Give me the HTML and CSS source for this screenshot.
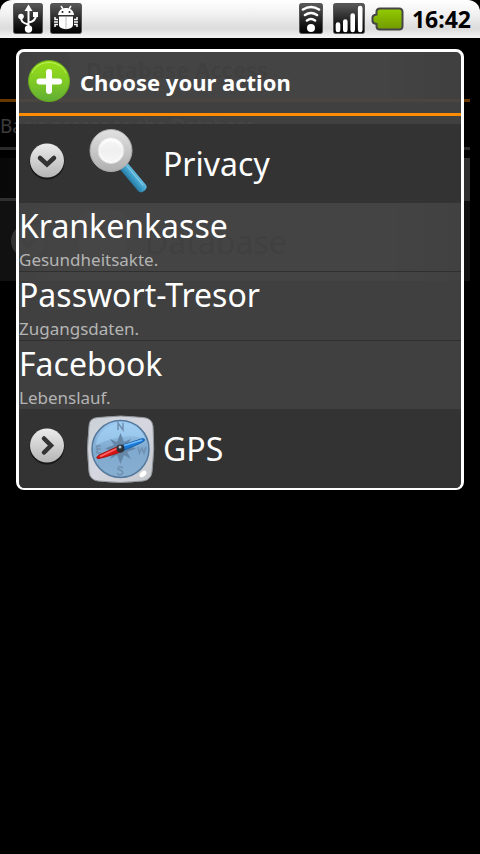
FILE: index.html
```html
<!DOCTYPE html>
<html lang="de">
<head>
<meta charset="utf-8">
<meta name="viewport" content="width=device-width, initial-scale=1">
<title>Choose your action</title>
<link rel="stylesheet" href="styles.css">
</head>
<body>
<header class="status">
  <svg class="status-icon usb" width="30" height="32" viewBox="0 0 30 32" aria-hidden="true">
    <defs><linearGradient id="tile" x1="0" y1="0" x2="0" y2="1"><stop offset="0" stop-color="#5a5a5a"/><stop offset=".7" stop-color="#151515"/><stop offset="1" stop-color="#000"/></linearGradient></defs>
    <rect x=".5" y=".5" width="29" height="30" rx="2" fill="url(#tile)" stroke="#555"/>
    <g fill="none" stroke="#fff" stroke-width="2"><path d="M15.500 6V26M15.500 21.500C9 20 8 18 8 14M15.500 19.500C21 18.500 23 16 23 12"/></g>
    <g fill="#fff"><path d="M15.500 1.500L19.500 8H11.500Z"/><circle cx="8" cy="13.500" r="2.800"/><rect x="20" y="9" width="5" height="5"/><circle cx="15.500" cy="26" r="3.700"/></g>
  </svg>
  <svg class="status-icon debug" width="32" height="32" viewBox="0 0 32 32" aria-hidden="true">
    <rect x=".5" y=".5" width="31" height="30" rx="2" fill="url(#tile)" stroke="#555"/>
    <g fill="#fff"><path d="M8 12C8.500 2.500 23.500 2.500 24 12Z"/><path d="M9 13.500H23V22C23 27.500 9 27.500 9 22Z"/></g>
    <g stroke="#fff" stroke-width="1.500" fill="none"><path d="M11 3L13 6M21 3L19 6M8 16.500H5V14M8 19H4M8 21.500H5V24M24 16.500H27V14M24 19H28M24 21.500H27V24"/></g>
    <path d="M16 14V26" stroke="#bbb" stroke-width="1"/><circle cx="12.500" cy="9" r="1" fill="#222"/><circle cx="19.500" cy="9" r="1" fill="#222"/>
  </svg>
  <svg class="status-icon wifi" width="24" height="32" viewBox="0 0 24 32" aria-hidden="true">
    <rect x=".5" y=".5" width="23" height="30" rx="2" fill="url(#tile)" stroke="#555"/>
    <g fill="none" stroke="#fff" stroke-width="2.600" stroke-linecap="round"><path d="M4 6.500Q12 1.500 20 6.500M6 12Q12 8 18 12M8 17.500Q12 14.500 16 17.500"/></g>
    <circle cx="12" cy="25" r="4" fill="#fff"/>
  </svg>
  <svg class="status-icon signal" width="32" height="32" viewBox="0 0 32 32" aria-hidden="true">
    <rect x=".5" y=".5" width="31" height="30" rx="2" fill="url(#tile)" stroke="#555"/>
    <g stroke="#fff" stroke-width="4.600" stroke-linecap="round"><path d="M5 21.500V27M12.300 18.500V27M19.700 12.500V27M27.200 5V27"/></g>
  </svg>
  <svg class="status-icon battery" width="34" height="26" viewBox="0 0 34 26" aria-hidden="true">
    <defs><linearGradient id="batt" x1="0" y1="0" x2="0" y2="1"><stop offset="0" stop-color="#94cc00"/><stop offset="1" stop-color="#719900"/></linearGradient></defs>
    <path d="M9 1.500H28Q31.500 1.500 31.500 5V19Q31.500 22.500 28 22.500H9Q5.500 22.500 5.500 19V17Q1.500 16.500 1.500 14V10.500Q1.500 8 5.500 7.500V5Q5.500 1.500 9 1.500Z" fill="url(#batt)" stroke="#454545" stroke-width="2"/>
  </svg>
  <time class="clock">16:42</time>
</header>

<main class="screen">
  <section class="page" aria-hidden="true">
    <div class="page-title">
      <svg width="32" height="32" viewBox="0 0 32 32"><rect width="32" height="32" rx="3" fill="#1c1c1c"/></svg>
      <span>Database Access</span>
    </div>
    <p class="page-note">Basic access to the Database.</p>
    <div class="page-band"></div>
    <div class="page-row">
      <svg width="34" height="34" viewBox="0 0 34 34"><circle cx="17" cy="17" r="17" fill="#343434"/><path d="M9 14L17 22L25 14" fill="none" stroke="#151515" stroke-width="4"/></svg>
      <svg width="48" height="64" viewBox="0 0 48 64"><path d="M0 10C0-3 48-3 48 10V54C48 67 0 67 0 54Z" fill="#404040"/></svg>
      <span>Database</span>
    </div>
  </section>

  <section class="dialog" role="dialog" aria-labelledby="dialog-title">
    <div class="dialog-head">
      <svg width="42" height="42" viewBox="0 0 42 42" aria-hidden="true">
        <defs><linearGradient id="green" x1="0" y1="0" x2="0" y2="1"><stop offset="0" stop-color="#99df18"/><stop offset=".5" stop-color="#80cb24"/><stop offset="1" stop-color="#60ad35"/></linearGradient></defs>
        <circle cx="21" cy="21" r="20.500" fill="url(#green)" stroke="#68a71f"/>
        <path d="M4 13C10-1 32-1 38 13" fill="none" stroke="#bdf05e" stroke-width="1"/>
        <path d="M21 12V31M11.500 21.500H31" stroke="#fff" stroke-width="6" stroke-linecap="round"/>
      </svg>
      <h1 id="dialog-title">Choose your action</h1>
    </div>

    <button class="group" type="button" aria-expanded="true">
      <svg class="toggle" width="36" height="42" viewBox="0 0 36 42" aria-hidden="true">
        <defs><linearGradient id="knob" x1="0" y1="0" x2="0" y2="1"><stop offset="0" stop-color="#ececec"/><stop offset="1" stop-color="#b5b5b5"/></linearGradient></defs>
        <circle cx="18" cy="19" r="17.500" fill="#181818"/><circle cx="18" cy="17.500" r="17" fill="url(#knob)"/>
        <path d="M11 15L18 21.500L25 15" fill="none" stroke="#333" stroke-width="4.500" stroke-linecap="round"/>
      </svg>
      <svg class="picture" width="72" height="72" viewBox="0 0 72 72" aria-hidden="true">
        <defs>
          <linearGradient id="rim" x1="0" y1="0" x2="0" y2="1"><stop offset="0" stop-color="#e2e2e2"/><stop offset=".6" stop-color="#c3c3c3"/><stop offset="1" stop-color="#b0b0b0"/></linearGradient>
          <linearGradient id="handle" x1="0" y1="0" x2="1" y2="0"><stop offset="0" stop-color="#2778a0"/><stop offset=".5" stop-color="#3e9fca"/><stop offset="1" stop-color="#64b9dc"/></linearGradient>
          <linearGradient id="lens" x1="0" y1="0" x2="0" y2="1"><stop offset="0" stop-color="#fff"/><stop offset=".5" stop-color="#f2f2f2"/><stop offset="1" stop-color="#fff"/></linearGradient>
        </defs>
        <g transform="rotate(-40 27 23)"><path d="M22 42H32V71Q32 75 27 75Q22 75 22 71Z" fill="url(#handle)"/><path d="M29.500 44V70" stroke="#83cce7"/></g>
        <circle cx="27" cy="22.500" r="21" fill="url(#rim)" stroke="#aaa"/>
        <circle cx="27" cy="22.500" r="13" fill="url(#lens)" stroke="#ddd"/>
        <circle cx="27" cy="23.500" r="10" fill="#eee" opacity=".5"/>
      </svg>
      <span>Privacy</span>
    </button>

    <ul class="entries">
      <li><a href="#krankenkasse"><span class="entry-name">Krankenkasse</span><span class="entry-note">Gesundheitsakte.</span></a></li>
      <li><a href="#tresor"><span class="entry-name">Passwort-Tresor</span><span class="entry-note">Zugangsdaten.</span></a></li>
      <li><a href="#facebook"><span class="entry-name">Facebook</span><span class="entry-note">Lebenslauf.</span></a></li>
    </ul>

    <button class="group" type="button" aria-expanded="false">
      <svg class="toggle" width="36" height="42" viewBox="0 0 36 42" aria-hidden="true">
        <circle cx="18" cy="19" r="17.500" fill="#181818"/><circle cx="18" cy="17.500" r="17" fill="url(#knob)"/>
        <path d="M15 10.500L22 17.500L15 24.500" fill="none" stroke="#333" stroke-width="4.500" stroke-linecap="round"/>
      </svg>
      <svg class="picture" width="72" height="72" viewBox="0 0 72 72" aria-hidden="true">
        <defs>
          <linearGradient id="case" x1="0" y1="0" x2="1" y2="1"><stop offset="0" stop-color="#cbd1d7"/><stop offset=".5" stop-color="#d5d6df"/><stop offset="1" stop-color="#c4c8cc"/></linearGradient>
          <linearGradient id="dial" x1="0" y1="0" x2="0" y2="1"><stop offset="0" stop-color="#9dccf3"/><stop offset=".5" stop-color="#80a9cf"/><stop offset="1" stop-color="#86afd1"/></linearGradient>
        </defs>
        <path d="M14 4.500Q37 1.500 59 4.500Q68 5 69 13Q71 36 68 59Q67 67 59 68Q36 71 14 68Q6 67 5 59Q2 36 5 13Q5 5 14 4.500Z" fill="url(#case)" stroke="#8e9499"/>
        <circle cx="36.500" cy="36" r="28.500" fill="url(#dial)" stroke="#55799c" stroke-width="1.500"/>
        <path d="M12 32C14 8 54 0 61 26C45 20 28 25 12 32Z" fill="#a7d6fa" opacity=".5"/>
        <path d="M36.500 20L40 29L47 26L43 32L52 35.500L43 39L47 46L40 42L36.500 51L33 42L26 46L30 39L21 35.500L30 32L26 26L33 29Z" fill="#6588a9"/>
        <g fill="none" stroke="#7090b0" stroke-width="1.500"><path d="M34 17V10L39 17V10M39 55Q34 52 34 56Q39 58 39 60Q35 64 33 60M17 33H13V40H17M13 36H17M54 34L55.500 40L58 35L60 40L62 34"/></g>
        <path d="M36 33L57 26Q61 25 60.500 27.500Q59 29.500 38 38Z" fill="#197bd8" stroke="#1860a7"/>
        <path d="M40 32.500L58 27" stroke="#70baff" stroke-width="1.500"/>
        <path d="M35 33L15 42Q11 45 14 45.500Q18 45.500 38 38.500Z" fill="#db1212" stroke="#9d1919"/>
        <path d="M33 35.500L16 43.500" stroke="#ff6868" stroke-width="1.500"/>
        <circle cx="36.500" cy="35.500" r="4" fill="#2b3138"/><circle cx="36" cy="34" r="1.500" fill="#aebdc9"/>
        <ellipse cx="59" cy="61" rx="4" ry="2.500" fill="#fff" transform="rotate(-40 59 61)"/>
      </svg>
      <span>GPS</span>
    </button>
  </section>
</main>
</body>
</html>
```
FILE: styles.css
```css
* { box-sizing: border-box; }

body {
  margin: 0;
  min-height: 100vh;
  background: #000;
  color: #fff;
  font-family: "Noto Sans", "Open Sans", sans-serif;
}

h1, p, ul { margin: 0; padding: 0; }
svg { display: block; flex: none; }

.status {
  display: flex;
  align-items: flex-start;
  height: 38px;
  padding: 3px 9px 0 13px;
  border-radius: 12px 12px 0 0;
  background: linear-gradient(#fff 0%, #f2f2f2 35%, #dcdcdc 75%, #f4f4f4 100%);
  color: #000;
}
.debug { margin-left: 7px; }
.wifi { margin-left: auto; }
.signal { margin-left: 10px; }
.battery { margin: 4px 0 0 6px; }
.clock {
  margin-left: 7px;
  font-size: 23px;
  font-weight: 700;
  line-height: 32px;
}

.screen { position: relative; }

.page { margin-right: 10px; }
.page-title {
  display: flex;
  align-items: center;
  gap: 16px;
  height: 64px;
  padding-left: 38px;
  border-bottom: 3px solid #663800;
  background: linear-gradient(90deg, #000 16px, #303030 60px, #303030 80%, #000 97%) 0 12px no-repeat;
  color: #000;
  font-size: 22px;
  font-weight: 700;
}
.page-note {
  height: 48px;
  padding-top: 10px;
  border-bottom: 3px solid #2a2a2a;
  color: #3c3c3c;
  font-size: 19px;
  line-height: 28px;
  white-space: nowrap;
}
.page-band {
  height: 43px;
  margin-top: 8px;
  border-bottom: 3px solid #303030;
  background: linear-gradient(90deg, #080808, #303030);
}
.page-row {
  display: flex;
  align-items: center;
  height: 80px;
  padding-left: 11px;
  background: linear-gradient(90deg, #111 16px, #303030 60px, #303030 80%, #111 97%);
  color: #000;
  font-size: 32px;
}
.page-row svg + svg { margin: 0 18px 0 34px; }

.dialog {
  position: absolute;
  top: 11px;
  left: 16px;
  right: 16px;
  overflow: hidden;
  border: solid #fff;
  border-width: 3px 3px 2px;
  border-radius: 8px;
  background: rgba(71, 71, 71, 0.9);
}
.dialog-head {
  display: flex;
  align-items: flex-start;
  gap: 10px;
  height: 64px;
  margin-bottom: 8px;
  padding: 8px 0 0 9px;
  border-bottom: 3px solid #ff8c00;
}
.dialog-head h1 {
  font-size: 22px;
  font-weight: 700;
  line-height: 44px;
}
.group {
  display: flex;
  align-items: center;
  width: 100%;
  height: 79px;
  padding: 0 0 0 10px;
  border: 0;
  background: #333;
  color: #fff;
  font: inherit;
  font-size: 32px;
  line-height: 44px;
  text-align: left;
}
.picture { margin: 0 7px 0 19px; }

.entries { list-style: none; }
.entries li + li { border-top: 1px solid #303030; }
.entries a {
  display: block;
  color: inherit;
  text-decoration: none;
}
.entry-name, .entry-note { display: block; }
.entry-name {
  font-size: 32px;
  line-height: 46px;
}
.entry-note {
  color: #b4b4b4;
  font-size: 17px;
  line-height: 22px;
}
```
